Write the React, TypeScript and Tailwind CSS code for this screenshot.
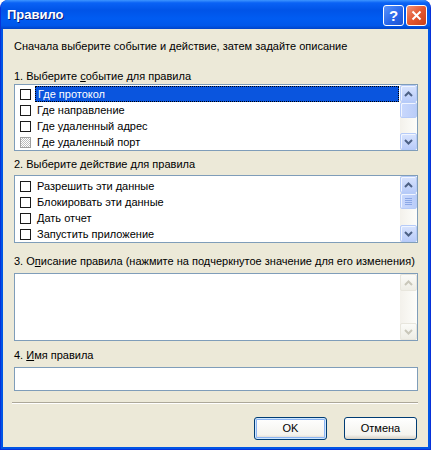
import React from 'react';

const font = "font-['Liberation_Sans',Arial,sans-serif]";

const Arrow = ({ dir, color }: { dir: 'up' | 'down'; color: string }) => (
  <svg width="9" height="6" viewBox="0 0 9 6">
    <path
      d={dir === 'up' ? 'M1 5 L4.5 1.5 L8 5' : 'M1 1 L4.5 4.5 L8 1'}
      fill="none"
      stroke={color}
      strokeWidth="2"
    />
  </svg>
);

const ScrollBtn = ({ dir, disabled }: { dir: 'up' | 'down'; disabled?: boolean }) => (
  <div
    className={
      disabled
        ? 'w-[17px] h-[17px] flex items-center justify-center rounded-[2px] border border-[#E8E6DD] bg-[linear-gradient(to_bottom,#FBFBF8,#EEEDE5)]'
        : 'w-[17px] h-[17px] flex items-center justify-center rounded-[2px] border border-[#B6CBF8] bg-[linear-gradient(to_bottom,#D8E3FD,#B9CCF9)] shadow-[inset_1px_1px_0_#F0F5FF]'
    }
  >
    <Arrow dir={dir} color={disabled ? '#C9C7BA' : '#4D6185'} />
  </div>
);

const Thumb = ({ grip }: { grip?: boolean }) => (
  <div className="w-[17px] h-[16px] flex flex-col items-center justify-center gap-[1px] rounded-[2px] border border-[#B6CBF8] bg-[linear-gradient(to_right,#C9D8FC,#BACDF9)] shadow-[inset_1px_1px_0_#F0F5FF]">
    {grip &&
      [0, 1, 2, 3].map(i => (
        <div key={i} className="w-[7px] h-[1px] bg-[#8CA8E6]" />
      ))}
  </div>
);

const ScrollBar = ({ grip, disabled }: { grip?: boolean; disabled?: boolean }) => (
  <div className="w-[17px] h-full flex flex-col bg-[linear-gradient(to_right,#F3F1EB,#FDFDFA)]">
    <ScrollBtn dir="up" disabled={disabled} />
    {!disabled && <Thumb grip={grip} />}
    <div className="flex-1" />
    <ScrollBtn dir="down" disabled={disabled} />
  </div>
);

const CheckRow = ({
  label,
  selected,
  mixed,
}: {
  label: string;
  selected?: boolean;
  mixed?: boolean;
}) => (
  <div className="flex items-center h-[16px]">
    <div className="w-[20px] h-full flex items-center pl-[5px]">
      <div
        className={
          mixed
            ? 'w-[11px] h-[11px] border border-[#A0A0A0] bg-[repeating-conic-gradient(#BDBDBD_0_25%,#FFFFFF_0_50%)] bg-[length:2px_2px]'
            : 'w-[11px] h-[11px] border border-[#1A1A1A] bg-white'
        }
      />
    </div>
    {selected ? (
      <div className="flex-1 h-full flex items-center pl-[2px] bg-[#0A55DE] text-white border border-dotted border-black">
        {label}
      </div>
    ) : (
      <div className="flex-1 h-full flex items-center pl-[2px] text-black">{label}</div>
    )}
  </div>
);

const XpButton = ({ children, def }: { children: React.ReactNode; def?: boolean }) => (
  <button
    type="button"
    className={
      def
        ? 'w-[73px] h-[23px] rounded-[3px] border border-[#003C74] bg-[linear-gradient(to_bottom,#FFFFFF,#F4F3EE_80%,#D6D0C5)] shadow-[inset_0_0_0_1px_#CEE7FF,inset_0_0_0_2px_#8CB4F2] text-black text-[11px]'
        : 'w-[73px] h-[23px] rounded-[3px] border border-[#003C74] bg-[linear-gradient(to_bottom,#FFFFFF,#F4F3EE_80%,#D6D0C5)] text-black text-[11px]'
    }
  >
    {children}
  </button>
);

export default function App() {
  return (
    <div className={`w-[431px] h-[450px] bg-white ${font} text-[11px] leading-[13px]`}>
      <div className="w-full h-full flex flex-col rounded-t-[8px] overflow-hidden bg-[#0055E5] border-x border-b border-[#0831D9]">
        <div className="h-[29px] flex items-center justify-between pl-[6px] pr-[3px] bg-[linear-gradient(to_bottom,#3D95FF_0%,#0A62F5_10%,#0054E8_35%,#005CF2_65%,#0057EA_88%,#0043C8_100%)]">
          <span className="text-white font-bold text-[13px] [text-shadow:1px_1px_0_#0A1E80]">
            Правило
          </span>
          <div className="flex gap-[2px] items-center mt-[2px]">
            <div className="w-[21px] h-[21px] rounded-[3px] border border-white flex items-center justify-center bg-[linear-gradient(135deg,#5A93FB,#2664E8_60%,#1E53D0)]">
              <span className="text-white font-bold text-[15px] leading-none">?</span>
            </div>
            <div className="w-[21px] h-[21px] rounded-[3px] border border-white flex items-center justify-center bg-[linear-gradient(135deg,#F09278,#E3572F_50%,#C8401B)]">
              <svg width="11" height="11" viewBox="0 0 11 11">
                <path d="M1.5 1.5 L9.5 9.5 M9.5 1.5 L1.5 9.5" stroke="white" strokeWidth="2" />
              </svg>
            </div>
          </div>
        </div>

        <div className="flex-1 flex flex-col mx-[2px] mb-[2px] bg-[#ECE9D8] pl-[11px] pr-[10px] pt-[11px]">
          <p>Сначала выберите событие и действие, затем задайте описание</p>

          <p className="mt-[17px]">
            1. Выберите <span className="underline">с</span>обытие для правила
          </p>
          <div className="mt-[1px] h-[67px] border border-[#7F9DB9] bg-white flex">
            <div className="flex-1 pt-[1px] pr-[1px]">
              <CheckRow label="Где протокол" selected />
              <CheckRow label="Где направление" />
              <CheckRow label="Где удаленный адрес" />
              <CheckRow label="Где удаленный порт" mixed />
            </div>
            <ScrollBar />
          </div>

          <p className="mt-[7px]">2. Выберите действие для правила</p>
          <div className="mt-[4px] h-[68px] border border-[#7F9DB9] bg-white flex">
            <div className="flex-1 pt-[2px] pr-[1px]">
              <CheckRow label="Разрешить эти данные" />
              <CheckRow label="Блокировать эти данные" />
              <CheckRow label="Дать отчет" />
              <CheckRow label="Запустить приложение" />
            </div>
            <ScrollBar grip />
          </div>

          <p className="mt-[12px]">
            3. О<span className="underline">п</span>исание правила (нажмите на подчеркнутое значение для его изменения)
          </p>
          <div className="mt-[5px] h-[68px] border border-[#7F9DB9] bg-white flex">
            <div className="flex-1" />
            <ScrollBar disabled />
          </div>

          <p className="mt-[8px]">
            4. <span className="underline">И</span>мя правила
          </p>
          <div className="mt-[5px] h-[24px] border border-[#7F9DB9] bg-white" />

          <div className="mt-[11px] -ml-[2px] h-[2px] border-t border-[#ACA899] border-b border-b-white" />

          <div className="mt-[13px] flex justify-end gap-[17px] pr-[1px]">
            <XpButton def>OK</XpButton>
            <XpButton>Отмена</XpButton>
          </div>
        </div>
      </div>
    </div>
  );
}
